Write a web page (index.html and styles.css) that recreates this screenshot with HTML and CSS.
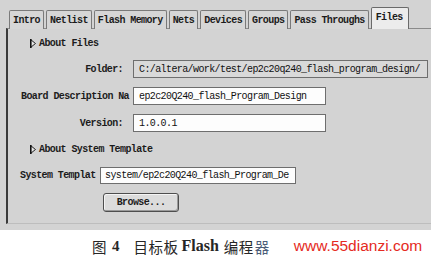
FILE: index.html
```html
<!DOCTYPE html>
<html>
<head>
<meta charset="utf-8">
<link rel="stylesheet" href="styles.css">
</head>
<body>
<div class="screen">
  <div class="tabs">
    <div class="tab">Intro</div>
    <div class="tab">Netlist</div>
    <div class="tab">Flash Memory</div>
    <div class="tab">Nets</div>
    <div class="tab">Devices</div>
    <div class="tab">Groups</div>
    <div class="tab">Pass Throughs</div>
    <div class="tab active">Files</div>
  </div>
  <div class="panel">
    <div class="section"><svg class="tri" width="6" height="9" viewBox="0 0 6 9"><polygon points="0.5,0.5 5.5,4.5 0.5,8.5" fill="#e8e8e8" stroke="#222" stroke-width="1"/><line x1="0.8" y1="0" x2="0.8" y2="9" stroke="#111" stroke-width="1.6"/></svg><span>About Files</span></div>
    <div class="row first">
      <div class="label">Folder:</div>
      <div class="box readonly">C:/altera/work/test/ep2c20q240_flash_program_design/</div>
    </div>
    <div class="row">
      <div class="label left">Board Description Na</div>
      <div class="box">ep2c20Q240_flash_Program_Design</div>
    </div>
    <div class="row">
      <div class="label">Version:</div>
      <div class="box">1.0.0.1</div>
    </div>
    <div class="section second"><svg class="tri" width="6" height="9" viewBox="0 0 6 9"><polygon points="0.5,0.5 5.5,4.5 0.5,8.5" fill="#e8e8e8" stroke="#222" stroke-width="1"/><line x1="0.8" y1="0" x2="0.8" y2="9" stroke="#111" stroke-width="1.6"/></svg><span>About System Template</span></div>
    <div class="row sys">
      <div class="label-sys">System Templat</div>
      <div class="box sysbox">system/ep2c20Q240_flash_Program_De</div>
    </div>
    <div class="btnrow"><div class="btn">Browse...</div></div>
  </div>
</div>
<div class="caption">
  <span class="cn">图</span><span class="num">4</span><span class="cn c2">目标板</span><span class="en">Flash</span><span class="cn c3">编程</span><span class="cn blur">器</span><span class="wm">www.55dianzi.com</span>
</div>
</body>
</html>
```
FILE: styles.css
```css
html, body {
  margin: 0;
  padding: 0;
  background: #ffffff;
}
body {
  width: 431px;
  height: 264px;
  overflow: hidden;
  font-family: "Liberation Mono", "DejaVu Sans Mono", monospace;
  font-weight: bold;
  font-size: 10px;
  letter-spacing: -0.6px;
  color: #1c1c1c;
}
.screen {
  height: 230px;
  background: #d3d3d3;
  padding-top: 7px;
  box-sizing: border-box;
  overflow: hidden;
}
.tabs {
  display: flex;
  align-items: flex-end;
  gap: 2px;
  margin-left: 9px;
  height: 22px;
  position: relative;
  z-index: 1;
  margin-bottom: -1px;
}
.tab {
  height: 19px;
  line-height: 19px;
  padding: 0 3px;
  border: 1px solid #7a7a7a;
  border-bottom: none;
  border-radius: 2px 2px 0 0;
  box-sizing: border-box;
  background: #d6d6d6;
  white-space: nowrap;
}
.tab.active {
  height: 22px;
  line-height: 20px;
  background: #ececec;
  border-color: #6a6a6a;
  padding: 0 5px 0 4px;
}
.panel {
  margin-left: 6px;
  border-top: 1px solid #8a8a8a;
  border-left: 2px solid #3a3a3a;
  height: 196px;
  box-sizing: border-box;
  padding-top: 7px;
  border-bottom: 1px solid #bdbdbd;
}
.section {
  display: flex;
  align-items: center;
  height: 14px;
  padding-left: 22px;
  gap: 3px;
}
.section.second {
  margin-top: 10px;
}
.tri {
  display: block;
}
.row {
  display: flex;
  align-items: center;
  height: 18px;
  margin-top: 9px;
  padding-left: 12px;
}
.row.first {
  margin-top: 10px;
}
.label {
  width: 109px;
  flex: none;
  text-align: right;
  padding-right: 6px;
  box-sizing: border-box;
  white-space: nowrap;
  margin-right: 4px;
}
.label.left {
  text-align: left;
  padding-right: 0;
  padding-left: 1px;
}
.box {
  height: 18px;
  line-height: 17px;
  width: 193px;
  box-sizing: border-box;
  border: 1px solid #6e6e6e;
  background: #fdfdfd;
  padding-left: 5px;
  white-space: nowrap;
  font-weight: normal;
  color: #111;
}
.box.readonly {
  background: #d9d9d9;
  width: 295px;
}
.row.sys {
  margin-top: 10px;
}
.label-sys {
  width: 80px;
  flex: none;
  white-space: nowrap;
}
.sysbox {
  width: 196px;
  height: 17px;
  line-height: 16px;
  padding-left: 4px;
}
.btnrow {
  margin-top: 9px;
  padding-left: 95px;
}
.btn {
  width: 76px;
  height: 19px;
  line-height: 17px;
  box-sizing: border-box;
  border: 1px solid #4e4e4e;
  border-radius: 3px;
  background: #dcdcdc;
  text-align: center;
  box-shadow: inset -1px -1px 0 #9a9a9a, inset 1px 1px 0 #f4f4f4;
}
.caption {
  height: 34px;
  display: flex;
  align-items: center;
  padding-left: 92px;
  padding-bottom: 2px;
  box-sizing: border-box;
  letter-spacing: 0;
  font-weight: normal;
  color: #262626;
}
.cn {
  font-family: "Noto Sans CJK SC", sans-serif;
  font-size: 14.5px;
  letter-spacing: 0.5px;
  font-weight: 400;
}
.num {
  font-family: "Liberation Serif", serif;
  font-weight: bold;
  font-size: 15px;
  margin-left: 5px;
}
.c2 {
  margin-left: 14px;
}
.en {
  font-family: "Liberation Serif", serif;
  font-weight: bold;
  font-size: 16px;
  margin-left: 3px;
}
.c3 {
  margin-left: 5px;
}
.blur {
  color: #4b5d78;
  margin-left: 1px;
}
.wm {
  font-family: "Liberation Sans", sans-serif;
  font-size: 15.5px;
  color: #e52a22;
  margin-left: 24px;
  font-weight: normal;
}
```
